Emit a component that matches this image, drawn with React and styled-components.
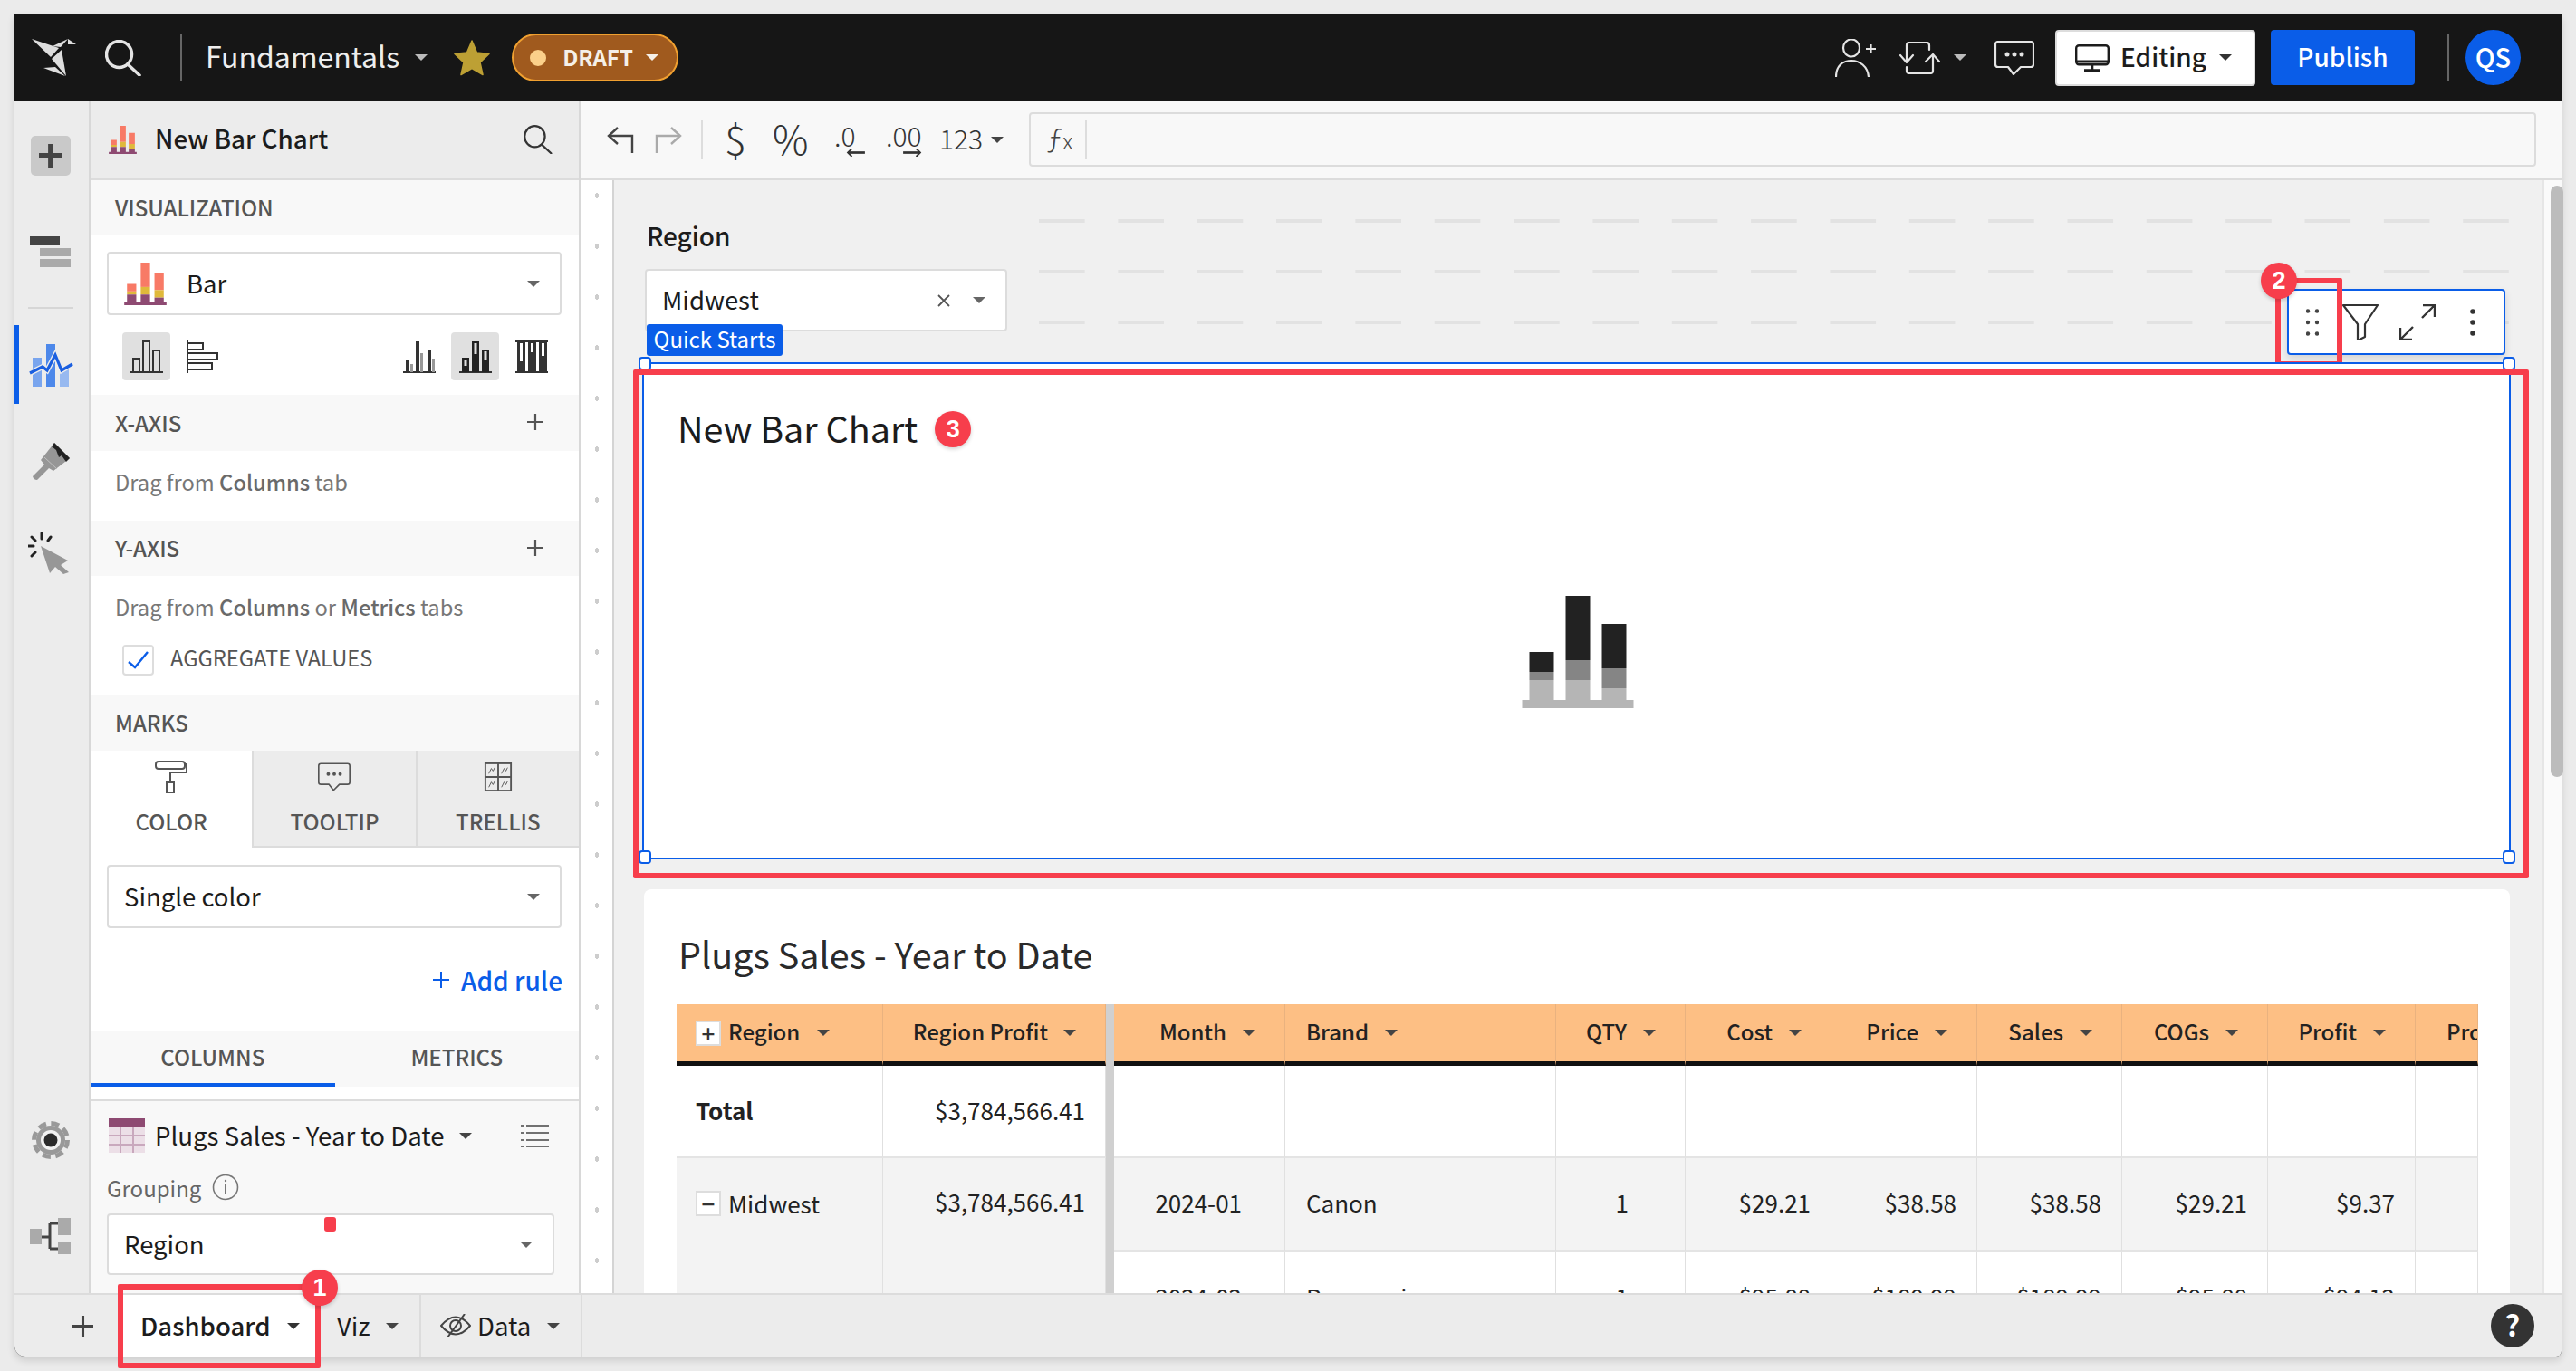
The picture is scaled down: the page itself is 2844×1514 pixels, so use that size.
import React from 'react'
import styled, { createGlobalStyle } from 'styled-components'

const BLUE = '#0a5de8'
const RED = '#f73e4c'

const GlobalStyle = createGlobalStyle`
  html, body {
    margin: 0;
    padding: 0;
    background: #ebebeb;
  }
  body {
    font-family: "Noto Sans CJK SC", "Noto Sans", sans-serif;
    color: #1c1c1c;
  }
  * { box-sizing: border-box; }
`

const Page = styled.div`
  width: 2844px;
  height: 1514px;
  padding: 16px;
  background: #ebebeb;
  overflow: hidden;
`
const Window = styled.div`
  height: 1482px;
  display: flex;
  flex-direction: column;
  background: #161616;
  box-shadow: 0 4px 8px rgba(0, 0, 0, 0.14);
  border-radius: 0 0 6px 12px;
`

/* top bar */
const TopBar = styled.header`
  height: 95px;
  flex: none;
  display: flex;
  align-items: center;
  padding: 0 45px 0 19px;
  background: #161616;
  color: #e4e4e4;
`
const Slot = styled.span`
  display: inline-flex;
  align-items: center;
  justify-content: center;
  flex: none;
  margin-left: ${p => p.$ml || 0}px;
  color: ${p => p.$color || 'inherit'};
`
const VLine = styled.span`
  flex: none;
  width: 2px;
  height: ${p => p.$h || 53}px;
  margin-left: ${p => p.$ml || 0}px;
  background: ${p => p.$color || '#666'};
`
const Caret = styled.span`
  flex: none;
  width: 0;
  height: 0;
  margin-left: ${p => p.$ml || 0}px;
  border-left: ${p => p.$w || 7.5}px solid transparent;
  border-right: ${p => p.$w || 7.5}px solid transparent;
  border-top: ${p => (p.$w || 7.5) * 1.05}px solid ${p => p.$color || '#666'};
`
const DocName = styled.span`
  margin-left: 26px;
  padding-bottom: 5px;
  font-size: 32px;
  line-height: 40px;
  color: #eee;
`
const DraftPill = styled.span`
  margin-left: 24px;
  width: 184px;
  height: 53px;
  display: flex;
  align-items: center;
  padding-left: 18px;
  border-radius: 27px;
  border: 2px solid #f0a030;
  background: #a05a1e;
  color: #f5f0e8;
  font-size: 24px;
  font-weight: 700;
`
const DraftDot = styled.span`
  width: 18px;
  height: 18px;
  border-radius: 50%;
  background: #fbd08a;
  margin-right: 18px;
`
const DraftText = styled.span`
  padding-bottom: 3px;
`
const Spacer = styled.span`
  flex: 1;
`
const EditingButton = styled.button`
  margin-left: 23px;
  width: 221px;
  height: 62px;
  display: flex;
  align-items: center;
  padding: 0 0 0 20px;
  background: #fff;
  border: 2px solid #ddd;
  border-radius: 4px;
  color: #1c1c1c;
  font: 500 28px/36px "Noto Sans CJK SC", sans-serif;
`
const EditingText = styled.span`
  margin-left: 12px;
  padding-bottom: 3px;
`
const PublishButton = styled.button`
  margin-left: 17px;
  width: 159px;
  height: 61px;
  padding: 0 0 3px;
  background: ${BLUE};
  border: none;
  border-radius: 4px;
  color: #fff;
  font: 500 28px/36px "Noto Sans CJK SC", sans-serif;
`
const Avatar = styled.span`
  margin-left: 18px;
  width: 61px;
  height: 61px;
  padding-bottom: 3px;
  border-radius: 50%;
  display: flex;
  align-items: center;
  justify-content: center;
  background: ${BLUE};
  color: #fff;
  font-size: 29px;
  font-weight: 500;
`

/* body */
const Body = styled.div`
  flex: 1;
  min-height: 0;
  display: flex;
  background: #f8f8f8;
`
const Rail = styled.nav`
  width: 84px;
  flex: none;
  display: flex;
  flex-direction: column;
  align-items: center;
  background: #ececec;
  border-right: 2px solid #d8d8d8;
  padding: 39px 3px 0 0;
  position: relative;
`
const RailPlus = styled.span`
  width: 44px;
  height: 44px;
  border-radius: 5px;
  background: #c9c9c9;
  display: flex;
  align-items: center;
  justify-content: center;
`
const RailRule = styled.span`
  width: 50px;
  height: 2px;
  background: #d6d6d6;
  margin: 44px 0 39px;
`
const RailActive = styled.span`
  position: absolute;
  left: 0;
  top: 248px;
  width: 5px;
  height: 87px;
  background: ${BLUE};
`
const RailIcon = styled.span`
  display: flex;
  margin-top: ${p => p.$mt || 0}px;
  margin-left: ${p => p.$ml || 0}px;
`
const RailFoot = styled.div`
  margin-top: auto;
  padding-bottom: 43px;
  display: flex;
  flex-direction: column;
  align-items: center;
  gap: 64px;
`

/* left panel */
const Panel = styled.aside`
  width: 541px;
  flex: none;
  display: flex;
  flex-direction: column;
  background: #fff;
  border-right: 2px solid #d8d8d8;
`
const PanelHead = styled.div`
  height: 88px;
  flex: none;
  display: flex;
  align-items: center;
  padding-left: 20px;
  background: #ececec;
  border-bottom: 2px solid #dcdcdc;
`
const PanelTitle = styled.span`
  margin-left: 20px;
  padding-bottom: 4px;
  font-size: 27.8px;
  font-weight: 500;
`
const SectionHead = styled.div`
  height: ${p => p.$h || 62}px;
  flex: none;
  display: flex;
  align-items: center;
  justify-content: space-between;
  padding: 0 39px 2px 27px;
  background: #f8f8f8;
  color: #555;
  font-size: 24px;
  font-weight: 500;
`
const SectionBody = styled.div`
  height: ${p => p.$h}px;
  flex: none;
  padding: ${p => p.$pad || '18px 18px 0'};
`
const SelectBox = styled.div`
  width: ${p => p.$w || 502}px;
  height: ${p => p.$h || 70}px;
  margin-top: ${p => p.$mt || 0}px;
  display: flex;
  align-items: center;
  padding: 0 22px 0 17px;
  background: #fff;
  border: 2px solid #dcdcdc;
  border-radius: 4px;
  font-size: 27.5px;
  position: relative;
`
const SelectLabel = styled.span`
  margin-left: ${p => p.$ml || 0}px;
  padding-bottom: 3px;
  flex: 1;
`
const ChartTypes = styled.div`
  display: flex;
  margin: 19px 0 0 17px;
`
const TypeButton = styled.span`
  width: 53px;
  height: 53px;
  display: flex;
  align-items: center;
  justify-content: center;
  border-radius: 4px;
  margin-left: ${p => p.$ml || 0}px;
  background: ${p => (p.$on ? '#e0e0e0' : 'transparent')};
`
const Hint = styled.div`
  margin: 0 0 0 9px;
  color: #777;
  font-size: 23.7px;
  line-height: 36px;
  b {
    font-weight: 500;
    color: #6a6a6a;
  }
`
const CheckRow = styled.div`
  display: flex;
  align-items: center;
  margin: 21px 0 0 17px;
  color: #555;
  font-size: 23.7px;
`
const CheckText = styled.span`
  padding-bottom: 5px;
`
const CheckBox = styled.span`
  width: 35px;
  height: 34px;
  display: flex;
  align-items: center;
  justify-content: center;
  border: 2px solid #ddd;
  border-radius: 4px;
  margin-right: 18px;
`
const MarkTabs = styled.div`
  height: 107px;
  flex: none;
  display: flex;
`
const MarkTab = styled.div`
  flex: 1;
  display: flex;
  flex-direction: column;
  align-items: center;
  padding-top: 11px;
  color: #555;
  font-size: 24px;
  font-weight: 500;
  line-height: 32px;
  background: ${p => (p.$on ? '#fff' : '#ececec')};
  border-left: ${p => (p.$on ? 'none' : '2px solid #dcdcdc')};
  border-bottom: ${p => (p.$on ? 'none' : '2px solid #dcdcdc')};
`
const MarkIcon = styled.span`
  height: 36px;
  display: flex;
  align-items: center;
  margin-bottom: 15px;
`
const AddRule = styled.div`
  margin: 37px 0 0 0;
  display: flex;
  justify-content: flex-end;
  align-items: center;
  color: ${BLUE};
  font-size: 28px;
  font-weight: 500;
  line-height: 40px;
  svg {
    margin-right: 13px;
  }
`
const ListTabs = styled.div`
  height: 61px;
  flex: none;
  display: flex;
  background: #f8f8f8;
`
const ListTab = styled.div`
  width: 270px;
  display: flex;
  align-items: center;
  justify-content: center;
  color: #555;
  font-size: 24px;
  font-weight: 500;
  padding-bottom: 3px;
  border-bottom: ${p => (p.$on ? `4px solid ${BLUE}` : '4px solid transparent')};
`
const Source = styled.div`
  flex: 1;
  margin-top: 14px;
  padding: 0 0 0 18px;
  background: #f8f8f8;
  border-top: 2px solid #dcdcdc;
`
const SourceRow = styled.div`
  display: flex;
  align-items: center;
  height: 42px;
  margin: 17px 0 0 2px;
  font-size: 27.6px;
`
const SourceName = styled.span`
  margin-left: 11px;
  padding-bottom: 3px;
`
const GroupLabel = styled.div`
  display: flex;
  align-items: center;
  margin-top: 19px;
  height: 36px;
  color: #666;
  font-size: 24px;
  padding-bottom: 2px;
  svg {
    margin-left: 12px;
  }
`
const TinyFlag = styled.span`
  position: absolute;
  left: 238px;
  top: 2px;
  width: 13px;
  height: 16px;
  border-radius: 3px;
  background: ${RED};
`

/* main */
const Main = styled.main`
  flex: 1;
  min-width: 0;
  display: flex;
  flex-direction: column;
`
const Toolbar = styled.div`
  height: 88px;
  flex: none;
  display: flex;
  align-items: center;
  padding-left: 29px;
  background: #f8f8f8;
  border-bottom: 2px solid #dcdcdc;
  color: #444;
`
const Glyph = styled.span`
  margin-left: ${p => p.$ml || 0}px;
  width: ${p => p.$w}px;
  flex: none;
  padding-bottom: 4px;
  text-align: center;
  font-size: ${p => p.$size || 44}px;
  line-height: 44px;
  font-weight: 300;
  color: #333;
`
const Decimal = styled.span`
  margin-left: ${p => p.$ml || 0}px;
  width: ${p => p.$w}px;
  height: 38px;
  flex: none;
  display: flex;
  flex-direction: column;
  font-size: 30px;
  font-weight: 300;
  line-height: 28px;
  color: #333;
  svg {
    margin-top: 1px;
    align-self: flex-end;
  }
`
const FormulaBar = styled.div`
  margin: 0 28px 0 28px;
  flex: 1;
  height: 60px;
  display: flex;
  align-items: center;
  border: 2px solid #dcdcdc;
  border-radius: 4px;
  padding-left: 18px;
`
const FxLabel = styled.span`
  width: 25px;
  padding-bottom: 3px;
  font-size: 32px;
  line-height: 40px;
  font-weight: 300;
  color: #444;
  small {
    font-size: 24px;
  }
`
const Workspace = styled.div`
  flex: 1;
  min-height: 0;
  display: flex;
`
const Gutter = styled.div`
  width: 37px;
  flex: none;
  background-color: #fff;
  background-image: radial-gradient(ellipse 2px 3px at 18px 17px, #cdcdcd 95%, transparent 100%);
  background-size: 37px 56px;
  border-right: 2px solid #d4d4d4;
`
const Canvas = styled.div`
  flex: 1;
  min-width: 0;
  padding-left: 31px;
  background: #f0f0f0;
  overflow: hidden;
`
const ScrollTrack = styled.div`
  width: 21px;
  flex: none;
  padding: 6px 0 0 7px;
  background: #fafafa;
  border-left: 2px solid #e6e6e6;
`
const ScrollThumb = styled.div`
  width: 14px;
  height: 653px;
  border-radius: 7px;
  background: #bcbcbc;
`
const FilterRow = styled.div`
  width: 2063px;
  height: 201px;
  display: flex;
  position: relative;
`
const FilterCol = styled.div`
  width: 400px;
  flex: none;
  margin-left: 3px;
  padding-top: 44px;
  position: relative;
`
const FilterName = styled.div`
  height: 36px;
  margin: 0 0 18px 2px;
  padding-bottom: 2px;
  line-height: 34px;
  font-size: 28px;
  font-weight: 500;
`
const ClearX = styled.span`
  display: flex;
  margin-right: 25px;
`
const QuickTag = styled.span`
  position: absolute;
  left: 2px;
  top: 159px;
  width: 150px;
  height: 35px;
  border-radius: 3px;
  background: ${BLUE};
  color: #fff;
  font-size: 24px;
  line-height: 32px;
  text-align: center;
`
const GridLines = styled.div`
  width: 1624px;
  height: 116px;
  margin: 43px 0 0 35px;
  background-image:
    linear-gradient(to right, #e2e2e2 51px, transparent 51px),
    linear-gradient(to right, #e2e2e2 51px, transparent 51px),
    linear-gradient(to right, #e2e2e2 51px, transparent 51px);
  background-size: 87.35px 4px;
  background-repeat: repeat-x;
  background-position: 0 0, 0 56px, 0 112px;
`
const WidgetMenu = styled.div`
  position: absolute;
  right: 6px;
  top: 120px;
  width: 241px;
  height: 73px;
  display: flex;
  align-items: center;
  padding-left: 19px;
  background: #fff;
  border: 2px solid ${BLUE};
  border-radius: 4px;
  box-shadow: 0 4px 8px rgba(0, 0, 0, 0.12);
  color: #333;
`
const ChartWidget = styled.section`
  width: 2063px;
  height: 549px;
  position: relative;
  display: flex;
  flex-direction: column;
  padding: 44px 0 0 37px;
  background: #fff;
  border: 2px solid ${BLUE};
`
const WidgetTitle = styled.div`
  display: flex;
  align-items: center;
  height: 56px;
  font-size: 39.5px;
  color: #1c1c1c;
`
const WidgetTitleText = styled.span`
  padding-bottom: 5px;
`
const ChartEmpty = styled.div`
  margin: 156px 0 0 932px;
  display: flex;
`
const Handle = styled.span`
  position: absolute;
  width: 14px;
  height: 15px;
  background: #fff;
  border: 2px solid ${BLUE};
  border-radius: 4px;
  left: ${p => (p.$right ? 'auto' : '-6px')};
  right: ${p => (p.$right ? '-7px' : 'auto')};
  top: ${p => (p.$bottom ? 'auto' : '-8px')};
  bottom: ${p => (p.$bottom ? '-7px' : 'auto')};
`
const RedFrame = styled.span`
  position: absolute;
  border: 6px solid ${RED};
  border-radius: 2px;
  pointer-events: none;
  left: ${p => p.$l};
  top: ${p => p.$t};
  right: ${p => p.$r || 'auto'};
  bottom: ${p => p.$b || 'auto'};
  width: ${p => p.$w || 'auto'};
  height: ${p => p.$h || 'auto'};
`
const Badge = styled.span`
  width: 40px;
  height: 40px;
  border-radius: 50%;
  display: flex;
  align-items: center;
  justify-content: center;
  background: ${RED};
  color: #fff;
  font: 700 27px/40px "Liberation Sans", sans-serif;
  box-shadow: 0 2px 4px rgba(0, 0, 0, 0.18);
`
const InlineBadge = styled(Badge)`
  margin-left: 19px;
`
const FloatBadge = styled(Badge)`
  position: absolute;
  left: ${p => p.$l};
  top: ${p => p.$t};
`
const TableCard = styled.section`
  width: 2060px;
  margin: 33px 0 0 2px;
  padding: 45px 0 0 36px;
  background: #fff;
  border-radius: 8px 8px 0 0;
`
const TableTitle = styled.h2`
  margin: 0 0 26px 2px;
  height: 56px;
  padding-bottom: 4px;
  line-height: 52px;
  font-size: 39.5px;
  font-weight: 400;
  color: #2a2a2a;
`
const SalesTable = styled.table`
  width: 1989px;
  table-layout: fixed;
  border-collapse: separate;
  border-spacing: 0;
  font-size: 26px;
  line-height: 36px;
`
const HeadCell = styled.th`
  height: 68px;
  padding: 0;
  background: #fdbf84;
  border-bottom: 5px solid #111;
  border-right: 1px solid #e9b27f;
  font-weight: 500;
  color: #222;
  overflow: hidden;
  white-space: nowrap;
`
const HeadInner = styled.div`
  display: flex;
  align-items: center;
  justify-content: ${p => (p.$left ? 'flex-start' : 'flex-end')};
  padding: ${p => (p.$left ? `0 0 0 ${p.$pl || 23}px` : '0 32px 0 0')};
  font-size: 24px;
`
const HeadText = styled.span`
  padding-bottom: 3px;
`
const Gap = styled.td`
  padding: 0;
  background: #d0d0d0;
`
const Cell = styled.td`
  height: ${p => p.$h || 102}px;
  padding: ${p => (p.$left ? `0 0 3px ${p.$pl || 23}px` : `0 ${p.$pr || 22}px 3px 0`)};
  text-align: ${p => (p.$left ? 'left' : 'right')};
  vertical-align: middle;
  background: ${p => (p.$shade ? '#f3f3f3' : '#fff')};
  border-right: 1px solid #e0e0e0;
  border-bottom: ${p => p.$line || 2}px solid #e4e4e4;
  color: #222;
  font-weight: ${p => (p.$bold ? 700 : 400)};
  white-space: nowrap;
`
const MergedCell = styled(Cell)`
  vertical-align: top;
  padding-top: ${p => p.$pt || 0}px;
`
const TreeBox = styled.span`
  display: inline-flex;
  width: 28px;
  height: 28px;
  margin-right: 8px;
  flex: none;
  align-items: center;
  justify-content: center;
  background: #fff;
  border: 2px solid #ddd;
  color: #333;
  font-size: 26px;
  line-height: 24px;
  font-weight: 500;
`
const RegionCellInner = styled.div`
  display: flex;
  align-items: center;
  height: 100px;
`

/* bottom bar */
const BottomBar = styled.footer`
  height: 70px;
  flex: none;
  display: flex;
  align-items: center;
  background: #ececec;
  border-top: 2px solid #dcdcdc;
  border-radius: 0 0 6px 12px;
  position: relative;
  z-index: 2;
  font-size: 27.6px;
`
const AddPage = styled.span`
  display: flex;
  margin: 0 33px 0 64px;
`
const PageTab = styled.span`
  height: 68px;
  display: flex;
  align-items: center;
  position: relative;
  padding-left: ${p => p.$pl}px;
  width: ${p => p.$w}px;
  background: ${p => (p.$on ? '#fff' : 'transparent')};
  border-right: ${p => (p.$on ? 'none' : '2px solid #dcdcdc')};
  font-weight: ${p => (p.$on ? 500 : 400)};
`
const TabText = styled.span`
  padding-bottom: 3px;
  margin-left: ${p => p.$ml || 0}px;
`
const HelpDot = styled.span`
  margin: 0 30px 0 auto;
  width: 48px;
  height: 48px;
  border-radius: 50%;
  display: flex;
  align-items: center;
  justify-content: center;
  background: #333;
  color: #fff;
  font-size: 32px;
  font-weight: 700;
  padding-bottom: 4px;
`

/* ---- icons ---- */
const Logo = () => (
  <svg width="50" height="42" viewBox="0 0 50 42" fill="#dedede">
    <polygon points="0,0 30,10 21,20" />
    <polygon points="23,8 40,0 32,9" />
    <polygon points="40,0 49,6 40,6" />
    <polygon points="33,12 22,22 38,41" />
    <polygon points="13,32 26,31 37,41" />
  </svg>
)
const SearchIcon = ({ size = 40, w = 3.5, color = 'currentColor' }) => (
  <svg width={size} height={size} viewBox="0 0 40 40" fill="none" stroke={color} strokeWidth={w} strokeLinecap="round">
    <ellipse cx="15.5" cy="16" rx="14" ry="14.5" />
    <line x1="25" y1="27" x2="38" y2="39" />
  </svg>
)
const Star = () => (
  <svg width="40" height="40" viewBox="0 0 40 40">
    <path d="M20 1 L25.5 14 L39 15.5 L29 25 L32 38.5 L20 31.5 L8 38.5 L11 25 L1 15.5 L14.5 14 Z" fill="#bda034" stroke="#bda034" strokeWidth="1.5" strokeLinejoin="round" />
  </svg>
)
const PersonPlus = () => (
  <svg width="45" height="42" viewBox="0 0 45 42" fill="none" stroke="currentColor" strokeWidth="2.2">
    <ellipse cx="18" cy="10" rx="9" ry="9.5" />
    <path d="M1 42 C1 30 8 24 18 24 C27 24 36 30 37 42" />
    <path d="M34 11 H45 M39.5 6 V16" />
  </svg>
)
const SyncIcon = () => (
  <svg width="45" height="36" viewBox="0 0 45 36" fill="none" stroke="currentColor" strokeWidth="2.2" strokeLinecap="round" strokeLinejoin="round">
    <path d="M8 22 V4 Q8 1 11 1 H30 Q33 1 33 4 V9" />
    <path d="M1 15 L8 23 L15 15" />
    <path d="M37 15 V32 Q37 35 34 35 H11 Q8 35 8 32 V28" />
    <path d="M29 22 L37 14 L44 22" />
  </svg>
)
const CommentIcon = ({ w = 44, h = 38, stroke = 2.2 }) => (
  <svg width={w} height={h} viewBox="0 0 44 38" fill="none" stroke="currentColor" strokeWidth={stroke} strokeLinejoin="round">
    <path d="M4 1 H40 Q43 1 43 4 V26 Q43 29 40 29 H29 L21 37 L15 29 H4 Q1 29 1 26 V4 Q1 1 4 1 Z" />
    <circle cx="14" cy="15" r="1.4" fill="currentColor" />
    <circle cx="22" cy="15" r="1.4" fill="currentColor" />
    <circle cx="30" cy="15" r="1.4" fill="currentColor" />
  </svg>
)
const Monitor = () => (
  <svg width="38" height="30" viewBox="0 0 38 30" fill="none" stroke="#1c1c1c" strokeWidth="2.4">
    <rect x="1.2" y="1.2" width="35.6" height="21" rx="3" />
    <path d="M19 22 V28 M10 28.6 H28" strokeWidth="2.6" />
    <path d="M1.5 19 H36.5" strokeWidth="3" />
  </svg>
)
const PlusIcon = ({ size = 18, w = 2.2, color = 'currentColor' }) => (
  <svg width={size} height={size} viewBox="0 0 18 18" stroke={color} strokeWidth={w} fill="none">
    <path d="M9 0 V18 M0 9 H18" />
  </svg>
)
const LayersIcon = () => (
  <svg width="45" height="34" viewBox="0 0 45 34">
    <rect x="0" y="0" width="33" height="10" fill="#444" />
    <rect x="11" y="13" width="34" height="9" fill="#aaa" />
    <rect x="11" y="25" width="34" height="9" fill="#aaa" />
  </svg>
)
const RailChart = () => (
  <svg width="50" height="48" viewBox="0 0 50 48">
    <rect x="5" y="15" width="10" height="32" fill="#79a5ee" />
    <rect x="20" y="0" width="10" height="47" fill="#4d88ea" />
    <rect x="35" y="28" width="10" height="19" fill="#97b9f0" />
    <path d="M2 32 L16 25 L21 29 L30 12 L37 29 L49 22" fill="none" stroke="#ececec" strokeWidth="6" />
    <path d="M2 32 L16 25 L21 29 L30 12 L37 29 L49 22" fill="none" stroke="#1a5fe0" strokeWidth="3.2" />
  </svg>
)
const BrushIcon = () => (
  <svg width="42" height="42" viewBox="0 0 42 42">
    <path d="M1 38 L14 25 L10 20 L25 1 L42 18 L24 32 L19 29 L6 42 Q2 42 1 38 Z" fill="#969696" />
    <path d="M22 5 L25 1 L42 18 L38 22 L33 15 L30 17 L27 9 Z" fill="#222" />
    <path d="M14 17 L28 30" stroke="#c0c0c0" strokeWidth="1" />
  </svg>
)
const CursorIcon = () => (
  <svg width="46" height="46" viewBox="0 0 46 46">
    <path d="M14 15 L44 31 L36 36 L45 44 L39 46 L30 38 L24 45 Z" fill="#979797" />
    <g stroke="#222" strokeWidth="3" strokeLinecap="round">
      <path d="M15 1 V7 M4 5 L8 9 M25 5 L22 9 M0 15 H6 M4 26 L8 22" />
    </g>
  </svg>
)
const GearIcon = () => (
  <svg width="42" height="44" viewBox="0 0 42 44">
    <circle cx="21" cy="22" r="16" fill="#999" />
    <circle cx="21" cy="22" r="18.5" fill="none" stroke="#999" strokeWidth="5" strokeDasharray="9 5.5" />
    <circle cx="21" cy="22" r="11" fill="#f2f2f2" />
    <circle cx="21" cy="22" r="7.5" fill="#2b2b2b" />
  </svg>
)
const TreeIcon = () => (
  <svg width="45" height="40" viewBox="0 0 45 40">
    <path d="M12 21 H22 M22 6 V34 M22 6 H32 M22 34 H32" stroke="#444" strokeWidth="3" fill="none" />
    <rect x="0" y="12" width="13" height="17" fill="#aaa" />
    <rect x="31" y="0" width="14" height="19" fill="#aaa" />
    <rect x="31" y="26" width="14" height="14" fill="#aaa" />
  </svg>
)
const STACK_COLORS = ['#f87a66', '#e0b93b', '#8e4a72']
const GREY_COLORS = ['#222', '#858585', '#b5b5b5']
const BarGlyph = ({ size, colors }) => {
  const bars = [
    { x: 8, t: 62, a: 84, b: 93 },
    { x: 48, t: 0, a: 71, b: 93 },
    { x: 88, t: 31, a: 80, b: 102 },
  ]
  return (
    <svg width={size} height={size} viewBox="0 0 123 124" style={{ flex: 'none' }}>
      {bars.map(b => (
        <g key={b.x}>
          <rect x={b.x} y={b.t} width="27" height={b.a - b.t} fill={colors[0]} />
          <rect x={b.x} y={b.a} width="27" height={b.b - b.a} fill={colors[1]} />
          <rect x={b.x} y={b.b} width="27" height={124 - b.b} fill={colors[2]} />
        </g>
      ))}
      <rect x="0" y="115" width="123" height="9" fill={colors[2]} />
    </svg>
  )
}
const MiniBars = ({ kind }) => {
  const c = '#333'
  if (kind === 'horizontal') {
    return (
      <svg width="36" height="36" viewBox="0 0 36 36" fill="none" stroke={c} strokeWidth="2">
        <path d="M1 0 V36" />
        <rect x="1" y="3" width="17" height="7" />
        <rect x="1" y="14" width="33" height="7" />
        <rect x="1" y="25" width="27" height="7" />
      </svg>
    )
  }
  if (kind === 'grouped') {
    return (
      <svg width="36" height="36" viewBox="0 0 36 36">
        <path d="M0 35 H36" stroke={c} strokeWidth="2" />
        <rect x="3" y="22" width="4" height="13" fill={c} />
        <rect x="8" y="26" width="3" height="9" fill="#999" />
        <rect x="14" y="1" width="4" height="34" fill={c} />
        <rect x="19" y="14" width="3" height="21" fill="#999" />
        <rect x="27" y="10" width="4" height="25" fill={c} />
        <rect x="32" y="20" width="3" height="15" fill="#999" />
      </svg>
    )
  }
  if (kind === 'stacked') {
    return (
      <svg width="36" height="36" viewBox="0 0 36 36">
        <path d="M0 35 H36" stroke={c} strokeWidth="2" />
        <rect x="3" y="19" width="8" height="16" fill="#222" />
        <rect x="5.5" y="21" width="3" height="7" fill="#e0e0e0" />
        <rect x="14" y="1" width="8" height="34" fill="#222" />
        <rect x="16.5" y="3" width="3" height="12" fill="#e0e0e0" />
        <rect x="25" y="10" width="8" height="25" fill="#222" />
        <rect x="27.5" y="12" width="3" height="10" fill="#e0e0e0" />
      </svg>
    )
  }
  if (kind === 'full') {
    return (
      <svg width="36" height="36" viewBox="0 0 36 36">
        <path d="M0 1 H36 M0 35 H36" stroke={c} strokeWidth="2" />
        <rect x="2" y="1" width="9" height="34" fill={c} />
        <rect x="14" y="1" width="9" height="34" fill={c} />
        <rect x="26" y="1" width="9" height="34" fill={c} />
        <rect x="5" y="3" width="3" height="20" fill="#fff" />
        <rect x="17" y="3" width="3" height="10" fill="#fff" />
        <rect x="29" y="3" width="3" height="14" fill="#fff" />
      </svg>
    )
  }
  return (
    <svg width="36" height="36" viewBox="0 0 36 36" fill="none" stroke={c} strokeWidth="2">
      <path d="M0 35 H36" />
      <rect x="3" y="20" width="7" height="15" />
      <rect x="14" y="1" width="7" height="34" />
      <rect x="25" y="11" width="7" height="24" />
    </svg>
  )
}
const Check = () => (
  <svg width="24" height="20" viewBox="0 0 24 20" fill="none" stroke={BLUE} strokeWidth="2.4">
    <path d="M1 12 L8 18 L22 1" />
  </svg>
)
const Roller = () => (
  <svg width="36" height="36" viewBox="0 0 36 36" fill="none" stroke="#555" strokeWidth="2">
    <rect x="1" y="1" width="32" height="8" rx="3" />
    <path d="M33 4 H35 V13 H17 V24" />
    <rect x="13" y="24" width="8" height="12" />
  </svg>
)
const Trellis = () => (
  <svg width="32" height="32" viewBox="0 0 32 34" fill="none" stroke="#555" strokeWidth="2">
    <rect x="1" y="1" width="30" height="32" />
    <path d="M16 1 V33 M1 17 H31" />
    <path d="M5 13 L8 7 L10 10 L12 6 M20 13 L23 7 L25 10 L27 6 M5 29 L8 23 L10 26 L12 22 M20 29 L23 23 L25 26 L27 22" strokeWidth="1" />
  </svg>
)
const TableGlyph = () => (
  <svg width="40" height="38" viewBox="0 0 40 38">
    <rect width="40" height="38" fill="#ecdfe7" />
    <rect width="40" height="10" fill="#8e4a72" />
    <path d="M13 10 V38 M27 10 V38 M0 19 H40 M0 29 H40" stroke="#c9a8bd" strokeWidth="2" />
  </svg>
)
const ListGlyph = () => (
  <svg width="31" height="25" viewBox="0 0 31 25" stroke="#444" strokeWidth="1.6" fill="none">
    <path d="M6 1 H31 M6 9 H31 M6 17 H31 M6 24 H31" />
    <path d="M0 1 H3 M0 9 H3 M0 17 H3 M0 24 H3" />
  </svg>
)
const InfoGlyph = () => (
  <svg width="30" height="30" viewBox="0 0 30 30" fill="none" stroke="#777" strokeWidth="1.6">
    <circle cx="15" cy="15" r="13.5" />
    <path d="M15 12 V23" strokeWidth="2" />
    <circle cx="15" cy="8" r="1.2" fill="#777" stroke="none" />
  </svg>
)
const ArrowBack = ({ color, flip }) => (
  <svg width="30" height="29" viewBox="0 0 30 29" fill="none" stroke={color} strokeWidth="2.4" style={flip ? { transform: 'scaleX(-1)' } : undefined}>
    <path d="M12 1 L2 10 L12 19" />
    <path d="M2 10 H28 V29" />
  </svg>
)
const TinyArrow = ({ right }) => (
  <svg width="22" height="10" viewBox="0 0 22 10" fill="none" stroke="#333" strokeWidth="2" style={right ? { transform: 'scaleX(-1)' } : undefined}>
    <path d="M6 0 L1 5 L6 10" />
    <path d="M1 5 H22" strokeWidth="3" />
  </svg>
)
const CloseX = () => (
  <svg width="14" height="14" viewBox="0 0 14 14" stroke="#555" strokeWidth="1.8">
    <path d="M1 1 L13 13 M13 1 L1 13" />
  </svg>
)
const DragDots = () => (
  <svg width="14" height="30" viewBox="0 0 14 30" fill="#444">
    {[2.5, 15, 27.5].flatMap(y => [2, 12].map(x => <circle key={`${x}-${y}`} cx={x} cy={y} r="2.2" />))}
  </svg>
)
const Funnel = () => (
  <svg width="40" height="40" viewBox="0 0 40 40" fill="none" stroke="#333" strokeWidth="2.2" strokeLinejoin="round">
    <path d="M1 1 H39 L25 22 V36 L17 40 V22 Z" />
  </svg>
)
const Expand = () => (
  <svg width="40" height="40" viewBox="0 0 40 40" fill="none" stroke="#333" strokeWidth="2.4">
    <path d="M26 1 H39 V14 M39 1 L25 15" />
    <path d="M1 26 V39 H14 M1 39 L15 25" />
  </svg>
)
const Kebab = () => (
  <svg width="6" height="30" viewBox="0 0 6 30" fill="#333">
    <circle cx="3" cy="3" r="2.8" />
    <circle cx="3" cy="15" r="2.8" />
    <circle cx="3" cy="27" r="2.8" />
  </svg>
)
const EyeOff = () => (
  <svg width="34" height="26" viewBox="0 0 34 26" fill="none" stroke="#444" strokeWidth="2">
    <path d="M1 13 Q17 -6 33 13 Q17 32 1 13 Z" />
    <circle cx="17" cy="13" r="6" />
    <path d="M27 0 L8 26" />
  </svg>
)

const columns = [
  { name: 'Month', w: 189 },
  { name: 'Brand', w: 299, left: true },
  { name: 'QTY', w: 143 },
  { name: 'Cost', w: 161 },
  { name: 'Price', w: 161 },
  { name: 'Sales', w: 160 },
  { name: 'COGs', w: 161 },
  { name: 'Profit', w: 163 },
  { name: 'Profit Margin', w: 69, clip: true },
]

const rows = [
  { month: '2024-01', brand: 'Canon', qty: '1', vals: ['$29.21', '$38.58', '$38.58', '$29.21', '$9.37'], shade: true },
  { month: '2024-02', brand: 'Panasonic', qty: '1', vals: ['$95.88', '$189.99', '$189.99', '$95.88', '$94.12'] },
]

const App = () => (
  <Page>
    <GlobalStyle />
    <Window>
      <TopBar>
        <Slot><Logo /></Slot>
        <Slot $ml={31}><SearchIcon /></Slot>
        <VLine $ml={43} />
        <DocName>Fundamentals</DocName>
        <Caret $ml={17} $color="#bbb" />
        <Slot $ml={29}><Star /></Slot>
        <DraftPill>
          <DraftDot />
          <DraftText>DRAFT</DraftText>
          <Caret $ml={14} $color="#f5f0e8" />
        </DraftPill>
        <Spacer />
        <Slot><PersonPlus /></Slot>
        <Slot $ml={26}><SyncIcon /></Slot>
        <Caret $ml={15} $color="#bbb" />
        <Slot $ml={31}><CommentIcon /></Slot>
        <EditingButton>
          <Monitor />
          <EditingText>Editing</EditingText>
          <Caret $ml={14} $color="#333" />
        </EditingButton>
        <PublishButton>Publish</PublishButton>
        <VLine $ml={36} />
        <Avatar>QS</Avatar>
      </TopBar>

      <Body>
        <Rail>
          <RailPlus><PlusIcon size={26} w={4} color="#444" /></RailPlus>
          <RailIcon $mt={67}><LayersIcon /></RailIcon>
          <RailRule />
          <RailActive />
          <RailIcon><RailChart /></RailIcon>
          <RailIcon $mt={60}><BrushIcon /></RailIcon>
          <RailIcon $mt={58} $ml={-4}><CursorIcon /></RailIcon>
          <RailFoot>
            <GearIcon />
            <TreeIcon />
          </RailFoot>
        </Rail>

        <Panel>
          <PanelHead>
            <BarGlyph size={31} colors={STACK_COLORS} />
            <PanelTitle>New Bar Chart</PanelTitle>
            <Spacer />
            <Slot style={{ marginRight: 29 }}><SearchIcon size={32} w={2.8} color="#333" /></Slot>
          </PanelHead>
          <SectionHead $h={61}>VISUALIZATION</SectionHead>
          <SectionBody $h={176}>
            <SelectBox>
              <BarGlyph size={47} colors={STACK_COLORS} />
              <SelectLabel $ml={22}>Bar</SelectLabel>
              <Caret />
            </SelectBox>
            <ChartTypes>
              <TypeButton $on><MiniBars kind="bars" /></TypeButton>
              <TypeButton $ml={9}><MiniBars kind="horizontal" /></TypeButton>
              <TypeButton $ml={186}><MiniBars kind="grouped" /></TypeButton>
              <TypeButton $ml={9} $on><MiniBars kind="stacked" /></TypeButton>
              <TypeButton $ml={9}><MiniBars kind="full" /></TypeButton>
            </ChartTypes>
          </SectionBody>
          <SectionHead>X-AXIS<PlusIcon /></SectionHead>
          <SectionBody $h={77} $pad="16px 18px 0">
            <Hint>Drag from <b>Columns</b> tab</Hint>
          </SectionBody>
          <SectionHead $h={61}>Y-AXIS<PlusIcon /></SectionHead>
          <SectionBody $h={131} $pad="16px 18px 0">
            <Hint>Drag from <b>Columns</b> or <b>Metrics</b> tabs</Hint>
            <CheckRow>
              <CheckBox><Check /></CheckBox>
              <CheckText>AGGREGATE VALUES</CheckText>
            </CheckRow>
          </SectionBody>
          <SectionHead>MARKS</SectionHead>
          <MarkTabs>
            <MarkTab $on><MarkIcon><Roller /></MarkIcon>COLOR</MarkTab>
            <MarkTab><MarkIcon><CommentIcon w={36} h={36} stroke={2} /></MarkIcon>TOOLTIP</MarkTab>
            <MarkTab><MarkIcon><Trellis /></MarkIcon>TRELLIS</MarkTab>
          </MarkTabs>
          <SectionBody $h={203} $pad="19px 18px 0">
            <SelectBox>
              <SelectLabel>Single color</SelectLabel>
              <Caret />
            </SelectBox>
            <AddRule><PlusIcon size={18} w={2} />Add rule</AddRule>
          </SectionBody>
          <ListTabs>
            <ListTab $on>COLUMNS</ListTab>
            <ListTab>METRICS</ListTab>
          </ListTabs>
          <Source>
            <SourceRow>
              <TableGlyph />
              <SourceName>Plugs Sales - Year to Date</SourceName>
              <Caret $ml={16} $color="#444" />
              <Spacer />
              <Slot style={{ marginRight: 33 }}><ListGlyph /></Slot>
            </SourceRow>
            <GroupLabel>Grouping<InfoGlyph /></GroupLabel>
            <SelectBox $w={494} $h={68} $mt={10}>
              <SelectLabel>Region</SelectLabel>
              <Caret />
              <TinyFlag />
            </SelectBox>
          </Source>
        </Panel>

        <Main>
          <Toolbar>
            <ArrowBack color="#444" />
            <Slot $ml={23}><ArrowBack color="#aaa" flip /></Slot>
            <VLine $ml={21} $h={44} $color="#ddd" />
            <Glyph $ml={24} $w={22}>$</Glyph>
            <Glyph $ml={31} $w={37} $size={44}>%</Glyph>
            <Decimal $ml={31} $w={35}>.0<TinyArrow /></Decimal>
            <Decimal $ml={22} $w={40}>.00<TinyArrow right /></Decimal>
            <Glyph $ml={19} $w={48} $size={30}>123</Glyph>
            <Caret $ml={9} $color="#444" />
            <FormulaBar>
              <FxLabel>ƒ<small>x</small></FxLabel>
              <VLine $ml={17} $h={44} $color="#ddd" />
            </FormulaBar>
          </Toolbar>
          <Workspace>
            <Gutter />
            <Canvas>
              <FilterRow>
                <FilterCol>
                  <FilterName>Region</FilterName>
                  <SelectBox $w={400} $h={69}>
                    <SelectLabel>Midwest</SelectLabel>
                    <ClearX><CloseX /></ClearX>
                    <Caret />
                  </SelectBox>
                  <QuickTag>Quick Starts</QuickTag>
                </FilterCol>
                <GridLines />
                <WidgetMenu>
                  <DragDots />
                  <Slot $ml={26}><Funnel /></Slot>
                  <Slot $ml={23}><Expand /></Slot>
                  <Slot $ml={38}><Kebab /></Slot>
                  <RedFrame $l="-15px" $t="-14px" $w="74px" $h="98px" />
                  <FloatBadge $l="-31px" $t="-31px">2</FloatBadge>
                </WidgetMenu>
              </FilterRow>

              <ChartWidget>
                <WidgetTitle>
                  <WidgetTitleText>New Bar Chart</WidgetTitleText>
                  <InlineBadge>3</InlineBadge>
                </WidgetTitle>
                <ChartEmpty>
                  <BarGlyph size={124} colors={GREY_COLORS} />
                </ChartEmpty>
                <Handle />
                <Handle $right />
                <Handle $bottom />
                <Handle $right $bottom />
                <RedFrame $l="-12px" $t="6px" $r="-22px" $b="-23px" />
              </ChartWidget>

              <TableCard>
                <TableTitle>Plugs Sales - Year to Date</TableTitle>
                <SalesTable>
                  <colgroup>
                    <col style={{ width: 228 }} />
                    <col style={{ width: 246 }} />
                    <col style={{ width: 9 }} />
                    {columns.map(c => <col key={c.name} style={{ width: c.w }} />)}
                  </colgroup>
                  <thead>
                    <tr>
                      <HeadCell>
                        <HeadInner $left $pl={21}>
                          <TreeBox>+</TreeBox>
                          <HeadText>Region</HeadText>
                          <Caret $ml={19} $w={7} $color="#444" />
                        </HeadInner>
                      </HeadCell>
                      <HeadCell>
                        <HeadInner><HeadText>Region Profit</HeadText><Caret $ml={17} $w={7} $color="#444" /></HeadInner>
                      </HeadCell>
                      <Gap />
                      {columns.map(c => (
                        <HeadCell key={c.name}>
                          {c.clip ? (
                            <HeadInner $left $pl={34}><HeadText>{c.name}</HeadText></HeadInner>
                          ) : (
                            <HeadInner $left={c.left}>
                              <HeadText>{c.name}</HeadText>
                              <Caret $ml={18} $w={7} $color="#444" />
                            </HeadInner>
                          )}
                        </HeadCell>
                      ))}
                    </tr>
                  </thead>
                  <tbody>
                    <tr>
                      <Cell $left $bold $pl={21}>Total</Cell>
                      <Cell>$3,784,566.41</Cell>
                      <Gap />
                      {columns.map(c => <Cell key={c.name} />)}
                    </tr>
                    {rows.map((r, i) => (
                      <tr key={r.month}>
                        {i === 0 && (
                          <>
                            <MergedCell $left $shade rowSpan={2} $pl={21}>
                              <RegionCellInner>
                                <TreeBox>−</TreeBox>
                                Midwest
                              </RegionCellInner>
                            </MergedCell>
                            <MergedCell $shade rowSpan={2} $pt={30}>$3,784,566.41</MergedCell>
                          </>
                        )}
                        <Gap />
                        <Cell $shade={r.shade} $line={3} $h={104} $pr={47}>{r.month}</Cell>
                        <Cell $left $shade={r.shade} $line={3} $h={104}>{r.brand}</Cell>
                        <Cell $shade={r.shade} $line={3} $h={104} $pr={62}>{r.qty}</Cell>
                        {r.vals.map((v, j) => (
                          <Cell key={j} $shade={r.shade} $line={3} $h={104}>{v}</Cell>
                        ))}
                        <Cell $shade={r.shade} $line={3} $h={104} />
                      </tr>
                    ))}
                  </tbody>
                </SalesTable>
              </TableCard>
            </Canvas>
            <ScrollTrack><ScrollThumb /></ScrollTrack>
          </Workspace>
        </Main>
      </Body>

      <BottomBar>
        <AddPage><PlusIcon size={23} w={2.4} color="#444" /></AddPage>
        <PageTab $on $w={214} $pl={19}>
          <TabText>Dashboard</TabText>
          <Caret $ml={18} $color="#333" />
          <RedFrame $l="-6px" $t="-12px" $r="-4px" $b="-13px" />
          <FloatBadge $l="197px" $t="-28px">1</FloatBadge>
        </PageTab>
        <PageTab $w={115} $pl={22}>
          <TabText>Viz</TabText>
          <Caret $ml={17} $color="#444" />
        </PageTab>
        <PageTab $w={178} $pl={21}>
          <EyeOff />
          <TabText $ml={7}>Data</TabText>
          <Caret $ml={18} $color="#444" />
        </PageTab>
        <HelpDot>?</HelpDot>
      </BottomBar>
    </Window>
  </Page>
)

export default App
